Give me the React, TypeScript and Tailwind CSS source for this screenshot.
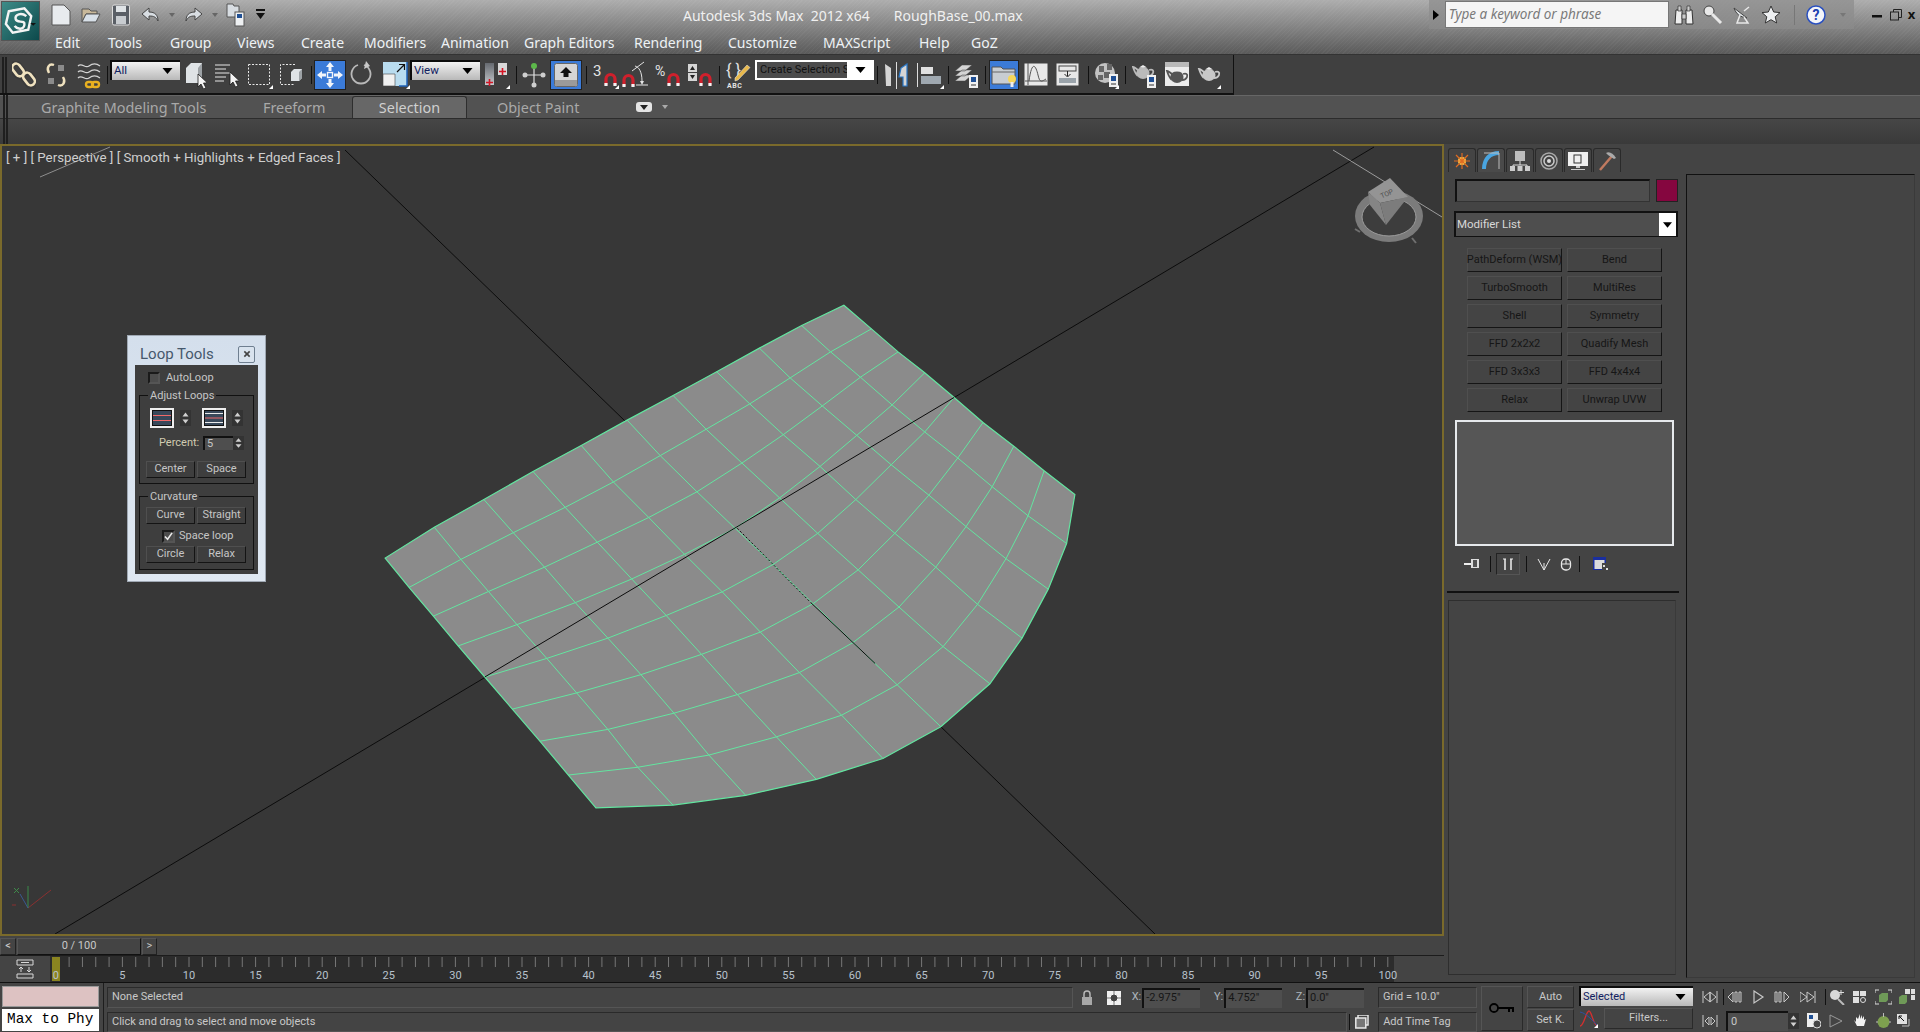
import React from 'react';

type SvgProps = { w: number; h?: number; className?: string; children?: React.ReactNode };

// every icon is drawn in its own little box, w wide and 28 high unless told otherwise
const Ic = ({ w, h = 28, className = '', children }: SvgProps) => (
  <svg viewBox={`0 0 ${w} ${h}`} width={w} height={h} className={`shrink-0 ${className}`}>
    {children}
  </svg>
);

const Cursor = ({ x, y }: { x: number; y: number }) => (
  <path transform={`translate(${x} ${y})`} d="M0 0v13l3-3 2.500 5 2.500-1-2.500-5h4z" fill="#f4f4f4" stroke="#1c1c1c" strokeWidth=".8" />
);
const Flyout = ({ x, y }: { x: number; y: number }) => (
  <path transform={`translate(${x} ${y})`} d="M4 0v4H0z" fill="#fff" />
);
const Magnet = ({ x, y }: { x: number; y: number }) => (
  <g transform={`translate(${x} ${y})`}>
    <path d="M2 13V7a4.500 4.500 0 0 1 9 0v6" fill="none" stroke="#d0202c" strokeWidth="3.200" />
    <path d="M.4 11h3.200v3H.4zM9.400 11h3.200v3H9.400z" fill="#f2f2f2" />
  </g>
);
const Teapot = ({ x = 0, y = 0, fill = '#c9c9c9' }: { x?: number; y?: number; fill?: string }) => (
  <g transform={`translate(${x} ${y})`}>
    <path d="M6 6c-2-1-3-3-5-3 1 3 2 6 4 8zM17 6c3-1 5 0 4 3s-3 3-5 3" fill="none" stroke={fill} strokeWidth="1.800" />
    <ellipse cx="11" cy="9" rx="6.500" ry="6" fill={fill} />
    <path d="M7 3.500h8l-4-2.500z" fill="#eee" />
  </g>
);
const SmallDoc = ({ x, y }: { x: number; y: number }) => (
  <g transform={`translate(${x} ${y})`}>
    <rect width="9" height="13" fill="#f0f0f0" />
    <rect x="2" y="2" width="5" height="5" fill="#1f4f94" />
    <path d="M2 10h5" stroke="#333" />
  </g>
);
const Gripper = ({ h = 'h-[32px]' }: { h?: string }) => (
  <div className={`${h} w-[5px] shrink-0 border-x-2 border-[#1f1f1f]`} />
);
const Sep = ({ ml, h = 'h-[18px]' }: { ml: string; h?: string }) => <div className={`w-px shrink-0 bg-[#111] ${h} ${ml}`} />;

const Drop = ({ label, className = '' }: { label: string; className?: string }) => (
  <div className={`flex h-[20px] shrink-0 items-center justify-between border-2 border-b-0 border-r-0 border-[#0c0c0c] bg-gradient-to-b from-[#f2f2f2] to-[#b9b9b9] pl-[2px] pr-[7px] font-['Roboto',sans-serif] text-[11.500px] text-[#102060] ${className}`}>
    <span>{label}</span>
    <svg viewBox="0 0 10 6" width="11" height="6"><path d="M0 0h10L5 6z" fill="#000" /></svg>
  </div>
);

const MainToolbar = () => (
  <div className="flex h-[40px] shrink-0 bg-[#404040]">
    <div className="flex h-full w-[1234px] shrink-0 items-center border-b-2 border-r border-[#111] pl-[2px] pt-px">
      <Gripper h="h-[36px]" />
      <Ic w={24} className="ml-[5px]">
        <g fill="none" stroke="#3a3a3a" strokeWidth="5"><rect x="1" y="2" width="9" height="15" rx="4.500" transform="rotate(-38 5 9)" /><rect x="13" y="12" width="9" height="15" rx="4.500" transform="rotate(-38 17 19)" /></g>
        <g fill="none" stroke="#f0e2bf" strokeWidth="2.600"><rect x="2" y="2" width="8" height="14" rx="4" transform="rotate(-38 6 9)" /><rect x="13" y="11" width="8" height="14" rx="4" transform="rotate(-38 17 18)" /></g>
      </Ic>
      <Ic w={22} className="ml-[9px]">
        <g fill="none" stroke="#f0e2bf" strokeWidth="2.400"><path d="M9 4C4 2 1 7 4 12" /><path d="M13 24c5 2 8-3 5-8" /></g>
        <g fill="#8b8b8b"><rect x="13" y="4" width="6" height="6" /><rect x="3" y="17" width="6" height="6" /></g>
      </Ic>
      <Ic w={24} className="ml-[10px]">
        <g fill="none" stroke="#d5d5d5" strokeWidth="1.300"><path d="M1 5c4-4 7 3 11 0s7-3 11 0" /><path d="M1 11c4-4 7 3 11 0s7-3 11 0" /><path d="M1 17c4-4 7 3 11 0s7-3 11 0" /></g>
        <g fill="none" stroke="#e8b020" strokeWidth="2.400"><rect x="9" y="21" width="7" height="5" rx="2.500" /><rect x="15" y="21" width="7" height="5" rx="2.500" /></g>
      </Ic>
      <Sep ml="ml-[6px]" />
      <Drop label="All" className="mb-[9px] ml-[2px] w-[70px]" />
      <Ic w={21} className="ml-[5px]">
        <path d="M1 7l5-5h11v15l-4 5H1z" fill="#dfe3e6" /><path d="M13 7l4-5v15l-4 5z" fill="#9da2a6" /><Cursor x={13} y={13} />
      </Ic>
      <Ic w={24} className="ml-[9px]">
        <path d="M0 4h15M0 8h11M0 12h15M0 16h11M0 20h9" stroke="#e6e6e6" strokeWidth="1.200" /><Cursor x={15} y={11} />
      </Ic>
      <Ic w={26} className="ml-[8px]">
        <rect x="1.500" y="3.500" width="21" height="20" fill="none" stroke="#e8e8e8" strokeDasharray="2 1.500" /><Flyout x={22} y={24} />
      </Ic>
      <Ic w={25} className="ml-[6px]">
        <path d="M16 3.500H1.500v20H16" fill="none" stroke="#e8e8e8" strokeDasharray="2 1.500" />
        <path d="M12 11l3-3h8v9l-3 3h-8z" fill="#dfe3e6" /><path d="M20 11l3-3v9l-3 3z" fill="#9da2a6" />
      </Ic>
      <Sep ml="ml-[7px]" />
      <div className="ml-[2px] flex h-[30px] w-[32px] shrink-0 items-center justify-center border border-[#222] bg-[#3b7bd8]">
        <Ic w={26} h={26}>
          <path d="M13 0l4 5h-2.500v4h-3V5H9zM13 26l-4-5h2.500v-4h3v4H17zM0 13l5-4v2.500h4v3H5V17zM26 13l-5 4v-2.500h-4v-3h4V9z" fill="#f2f5fa" />
          <rect x="10.500" y="10.500" width="5" height="5" fill="none" stroke="#f2f5fa" strokeWidth="1.400" />
        </Ic>
      </div>
      <Ic w={22} className="ml-[4px]">
        <path d="M8 4a9.500 9.500 0 1 0 6 0" fill="none" stroke="#b9b9b9" strokeWidth="1.800" /><path d="M16 0l-2 8 6-3z" fill="#c8c8c8" />
      </Ic>
      <Ic w={27} className="ml-[11px]">
        <path d="M0 1h24v24H0z" fill="#b9dcef" /><path d="M0 13h12v12H0z" fill="#f0f0f0" stroke="#444" strokeWidth=".6" />
        <path d="M14 11l7-7M16 3.500h5.500V9" fill="none" stroke="#111" strokeWidth="1.200" /><path d="M24 1v24h-8" fill="none" stroke="#1f62b8" strokeWidth="1.500" /><Flyout x={23} y={24} />
      </Ic>
      <Drop label="View" className="mb-[9px] w-[70px]" />
      <Ic w={26} className="ml-[4px]">
        <defs><linearGradient id="pv" x1="0" y1="0" x2="0" y2="1"><stop offset="0" stopColor="#666a70" /><stop offset="1" stopColor="#c5c8cc" /></linearGradient></defs>
        <rect x="1" y="2" width="9" height="22" fill="url(#pv)" /><rect x="14" y="2" width="9" height="12" fill="#d9d9d9" />
        <path d="M5.500 18v7M2 21.500h7M18.500 7v7M15 10.500h7" stroke="#d41525" strokeWidth="1.600" /><Flyout x={22} y={24} />
      </Ic>
      <Sep ml="ml-[6px]" />
      <Ic w={24} className="ml-[5px]">
        <path d="M12 4v20M2 14h20" stroke="#e0e0e0" strokeWidth="1.200" /><circle cx="12" cy="5" r="3" fill="#5cb84a" /><circle cx="3" cy="14" r="2.500" fill="#cfcfcf" /><circle cx="21" cy="14" r="2.500" fill="#cfcfcf" /><circle cx="12" cy="24" r="2.500" fill="#cfcfcf" />
      </Ic>
      <div className="ml-[4px] flex h-[30px] w-[32px] shrink-0 items-center justify-center border border-[#222] bg-[#3b7bd8]">
        <Ic w={24} h={24}>
          <rect x=".5" y=".5" width="23" height="23" rx="2" fill="#d5d5d5" stroke="#666" /><rect x="1" y="17" width="22" height="6" fill="#9a9a9a" /><path d="M12 4l6 6h-3.500v4h-5v-4H6z" fill="#111" />
        </Ic>
      </div>
      <Sep ml="ml-[4px]" />
      <Ic w={26} className="ml-[6px]">
        <text x="0" y="15" fontSize="15" fill="#e4e4e4" fontFamily="Roboto">3</text><Magnet x={11} y={11} /><Flyout x={22} y={24} />
      </Ic>
      <Ic w={27} className="ml-[3px]">
        <Magnet x={0} y={12} /><path d="M10 10L22 1M13 5c4 1 7 6 7 15M14 24h12" fill="none" stroke="#e4e4e4" /><path d="M20 24l-2-4h4z" fill="#e4e4e4" />
      </Ic>
      <Ic w={26} className="ml-[6px]">
        <text x="0" y="15" fontSize="14" fill="#e4e4e4" fontFamily="Roboto">%</text><Magnet x={12} y={11} />
      </Ic>
      <Ic w={25} className="ml-[7px]">
        <rect x="0" y="3" width="9" height="8" fill="#d5d5d5" /><rect x="0" y="12" width="9" height="8" fill="#d5d5d5" /><path d="M2 9l2.500-4L7 9zM2 14l2.500 4L7 14z" fill="#222" /><Magnet x={11} y={11} />
      </Ic>
      <Sep ml="ml-[6px]" />
      <Ic w={25} className="ml-[6px]">
        <text x="0" y="15" fontSize="16" fill="#e4e4e4" fontFamily="Roboto">{'{ }'}</text>
        <path d="M9 17L21 4l3 2.500L12 19l-3 1z" fill="#e8b84a" stroke="#eee" strokeWidth=".5" />
        <text x="1" y="27" fontSize="7" fill="#e4e4e4" fontWeight="700" fontFamily="Roboto" letterSpacing=".5">ABC</text>
      </Ic>
      <div className="mb-[9px] ml-[4px] flex h-[20px] w-[119px] shrink-0 items-center overflow-hidden border-2 border-white bg-white font-['Roboto',sans-serif] text-[11px] text-[#111]">
        <span className="flex h-full w-[90px] items-center overflow-hidden whitespace-nowrap bg-[#4c4c4c] pl-[3px]">Create Selection Set</span>
        <svg viewBox="0 0 10 6" width="11" height="6" className="ml-[8px]"><path d="M0 0h10L5 6z" fill="#000" /></svg>
      </div>
      <Sep ml="ml-[3px]" />
      <Ic w={24} className="ml-[7px]">
        <path d="M0 3l6 4v18H1zM22 3l-6 4-2 9h4v9h4z" fill="#d5d5d5" /><path d="M11.500 1v27" stroke="#ddd" /><path d="M22 3l-6 4-2 9h4v9h4z" fill="none" stroke="#2a78c8" strokeWidth="1.200" />
      </Ic>
      <Ic w={27} className="ml-[8px]">
        <path d="M.5 2v24" stroke="#ddd" /><rect x="4" y="6" width="12" height="7" fill="#e0e0e0" /><rect x="4" y="15" width="20" height="8" fill="#9fa8b0" /><Flyout x={23} y={24} />
      </Ic>
      <Sep ml="ml-[4px]" />
      <Ic w={25} className="ml-[5px]">
        <path d="M1 10l7-6h10l-7 6zM1 15l7-6h10l-7 6zM1 20l7-6h10l-7 6z" fill="#d5d5d5" stroke="#444" strokeWidth=".5" /><SmallDoc x={15} y={14} />
      </Ic>
      <Sep ml="ml-[6px]" />
      <div className="ml-[3px] flex h-[30px] w-[30px] shrink-0 items-center justify-center border border-[#222] bg-[#3b7bd8]">
        <Ic w={26} h={26}>
          <path d="M1 5h9l2 2h12v15H1z" fill="#c8cdd2" stroke="#555" /><path d="M1 10h23" stroke="#666" /><circle cx="21" cy="17" r="4" fill="#f5d65a" /><rect x="19.500" y="20" width="3" height="5" fill="#eee" />
        </Ic>
      </div>
      <Ic w={25} className="ml-[5px]">
        <rect x=".5" y="2.500" width="23" height="22" fill="#e8e8e8" /><path d="M4 2v22M1 20h22" stroke="#555" /><path d="M5 20c3-22 7-15 9-6s4 6 8 4" fill="none" stroke="#555" />
      </Ic>
      <Ic w={24} className="ml-[7px]">
        <rect x=".5" y="2.500" width="22" height="22" fill="#e8e8e8" /><rect x="3" y="5" width="17" height="5" fill="none" stroke="#444" /><rect x="3" y="17" width="17" height="5" fill="#9aa3aa" /><path d="M11.500 10v5M8.500 13l3 3 3-3" fill="none" stroke="#222" />
      </Ic>
      <Sep ml="ml-[8px]" />
      <Ic w={24} className="ml-[6px]">
        <circle cx="10" cy="12" r="10" fill="#c2c2c2" /><path d="M4 5h5v6H4zM9 11h6v6H9zM3 14h5v5H3zM12 3h5v6h-5z" fill="#666" /><SmallDoc x={14} y={13} /><Flyout x={20} y={24} />
      </Ic>
      <Sep ml="ml-[6px]" />
      <Ic w={25} className="ml-[6px]">
        <Teapot y={3} fill="#bbbbbb" /><SmallDoc x={15} y={14} />
      </Ic>
      <Ic w={24} className="ml-[8px]">
        <rect y="1" width="24" height="24" fill="#ececec" /><rect y="1" width="24" height="5" fill="#b9b9b9" /><Teapot x={1} y={7} fill="#555" />
      </Ic>
      <Ic w={24} className="ml-[8px]">
        <Teapot x={1} y={5} fill="#c8c8c8" /><Flyout x={20} y={24} />
      </Ic>
    </div>
  </div>
);

const Ribbon = () => (
  <div className="flex h-[49px] shrink-0 flex-col">
    <div className="flex h-[24px] items-center border-y border-y-[#666] border-b-[#2c2c2c] bg-[#525252] pl-[3px] text-[14.400px] text-[#a9a9a9]">
      <Gripper h="h-[24px]" />
      <span className="ml-[33px] mt-px w-[165px] whitespace-nowrap">Graphite Modeling Tools</span>
      <span className="ml-[57px] mt-px w-[60px]">Freeform</span>
      <span className="ml-[29px] flex h-[22px] w-[115px] items-center justify-center rounded-t-[3px] border border-b-0 border-[#2e2e2e] bg-[#676767] text-[#d0d0d0]">Selection</span>
      <span className="ml-[30px] mt-px w-[81px] whitespace-nowrap">Object Paint</span>
      <svg viewBox="0 0 16 10" width="16" height="10" className="ml-[58px]"><rect width="16" height="10" rx="3" fill="#e4e4e4" /><path d="M4 3h8L8 8z" fill="#222" /></svg>
      <svg viewBox="0 0 6 4" width="6" height="4" className="ml-[10px]"><path d="M0 0h6L3 4z" fill="#a9a9a9" /></svg>
    </div>
    <div className="flex h-[25px] items-center bg-gradient-to-b from-[#464646] to-[#3a3a3a] pl-[3px]">
      <Gripper h="h-[25px]" />
    </div>
  </div>
);

const rows = [
  '85,880 198,797 312,718 425,643 530,568 632,490 732,412 827,337 915,260 1003,183 1092,115',
  '138,965 258,892 380,820 495,746 607,673 712,597 810,512 900,428 985,343 1068,258 1150,183',
  '192,1053 320,990 447,925 570,855 685,782 795,705 892,615 980,522 1060,430 1137,340 1208,245',
  '250,1145 385,1090 518,1030 645,963 767,893 878,812 975,720 1058,620 1135,517 1208,420 1272,318',
  '310,1240 450,1192 590,1138 722,1078 850,1012 965,928 1063,828 1143,720 1217,607 1280,497 1335,392',
  '370,1335 518,1300 662,1252 800,1197 935,1132 1052,1043 1152,938 1232,820 1298,700 1355,582 1402,462',
  '432,1435 583,1412 738,1376 885,1322 1027,1258 1148,1168 1248,1055 1323,930 1385,795 1433,668 1468,535',
];
const cols = [
  '140,702 198,797 258,892 320,990 385,1090 450,1192 518,1300 583,1412 660,1524',
  '248,620 312,718 380,820 447,925 518,1030 590,1138 662,1252 738,1376 818,1495',
  '355,537 425,643 495,746 570,855 645,963 722,1078 800,1197 885,1322 972,1448',
  '460,460 530,568 607,673 685,782 767,893 850,1012 935,1132 1027,1258 1117,1386',
  '560,385 632,490 712,597 795,705 878,812 965,928 1052,1043 1148,1168 1243,1292',
  '660,312 732,412 810,512 892,615 975,720 1063,828 1152,938 1248,1055 1350,1165',
  '755,242 827,337 900,428 980,522 1058,620 1143,720 1232,820 1323,930 1420,1030',
  '848,172 915,260 985,343 1060,430 1135,517 1217,607 1298,700 1385,795 1477,885',
  '940,105 1003,183 1068,258 1137,340 1208,420 1280,497 1355,582 1433,668 1517,750',
];
const outline =
  '1032,45 1092,115 1150,183 1208,245 1272,318 1335,392 1402,462 1468,535 1535,605 1517,750 1477,885 1420,1030 1350,1165 1243,1292 1117,1386 972,1448 818,1495 660,1524 492,1532 432,1435 370,1335 310,1240 250,1145 192,1053 138,965 85,880 33,793 140,702 248,620 355,537 460,460 560,385 660,312 755,242 848,172 940,105';

const Scene = () => (
  <svg viewBox="2 146 1440 788" className="absolute inset-0 h-full w-full">
    <line x1="55" y1="934" x2="1374" y2="147" stroke="#0c0c0c" />
    <line x1="345" y1="150" x2="1155" y2="934" stroke="#0c0c0c" />
    <line x1="40" y1="177" x2="110" y2="147" stroke="#8e8e8e" />
    <g transform="translate(370 290) scale(.4592 .338)">
      <polygon points={outline} fill="#8b8b8b" stroke="#63e5a0" strokeWidth="1.200" vectorEffect="non-scaling-stroke" />
      <g fill="none" stroke="#63e5a0" strokeWidth="1">
        {rows.map(p => <polyline key={p} points={p} vectorEffect="non-scaling-stroke" />)}
        {cols.map(p => <polyline key={p} points={p} vectorEffect="non-scaling-stroke" />)}
      </g>
      <g fill="none" stroke="#0c0c0c" strokeWidth="1">
        <line x1="250" y1="1145" x2="1272" y2="318" vectorEffect="non-scaling-stroke" />
        <line x1="800" y1="705" x2="960" y2="925" strokeDasharray="2 2" vectorEffect="non-scaling-stroke" />
        <line x1="960" y1="925" x2="1100" y2="1105" vectorEffect="non-scaling-stroke" />
      </g>
    </g>
    {/* view cube */}
    <line x1="1333" y1="150" x2="1442" y2="217" stroke="#9c9c9c" />
    <g>
      <ellipse cx="1389" cy="216" rx="34" ry="26" fill="#7b7b7b" />
      <ellipse cx="1389" cy="217" rx="27" ry="19" fill="#3d3d3d" stroke="#9c9c9c" strokeWidth="1" />
      <polygon points="1390,178 1408,197 1380,203 1368,192" fill="#949494" />
      <polygon points="1368,192 1380,203 1386,225 1370,205" fill="#858585" />
      <polygon points="1380,203 1408,197 1386,225" fill="#7c7c7c" />
      <text x="1387" y="196" fontSize="7" textAnchor="middle" fill="#4e4e4e" transform="rotate(-24 1387 194)" fontFamily="Roboto">TOP</text>
      <path d="M1355 229l5 3M1412 238l4 5" stroke="#6f6f6f" strokeWidth="2" />
    </g>
    {/* axis tripod */}
    <g fill="none" strokeWidth="1">
      <path d="M28 908L51 890" stroke="#8a3030" />
      <path d="M28 908V886" stroke="#3a8a4a" />
      <path d="M28 908L20 894" stroke="#3a5a90" />
      <path d="M14 888l5 5M14 893l5-5" stroke="#3f8a4a" />
      <path d="M12 905h4" stroke="#8a3030" />
    </g>
  </svg>
);

const LoopBtn = ({ label, w = 'w-[49px]', className = '' }: { label: string; w?: string; className?: string }) => (
  <div className={`flex h-[17px] items-center justify-center border border-[#4f4f4f] border-b-[#141414] border-r-[#141414] text-[11px] text-[#c6c6c6] ${w} ${className}`}>
    {label}
  </div>
);
const Spin = ({ h = 'h-[16px]' }: { h?: string }) => (
  <svg viewBox="0 0 11 16" className={`w-[11px] shrink-0 ${h}`} preserveAspectRatio="none">
    <rect width="11" height="16" fill="#333" /><path d="M2.500 6.500l3-4 3 4zM2.500 9.500l3 4 3-4z" fill="#cfcfcf" />
  </svg>
);
const LoopIcon = ({ three }: { three?: boolean }) => (
  <div className="flex h-[20px] w-[24px] shrink-0 items-center justify-center border-2 border-[#eee] bg-[#111]">
    <svg viewBox="0 0 18 14" width="18" height="14">
      <rect width="18" height="14" fill="#38485a" />
      {three ? (
        <>
          <path d="M0 2.500h18M0 11.500h18" stroke="#e8e8e8" /><path d="M0 7h18" stroke="#f06868" />
        </>
      ) : (
        <path d="M0 4.500h18M0 9.500h18" stroke="#f06868" />
      )}
    </svg>
  </div>
);
const Legend = ({ children }: { children: string }) => (
  <legend className="ml-[2px] px-[2px] text-[11px] leading-[11px] text-[#c6c6c6]">{children}</legend>
);

const LoopTools = () => (
  <div className="absolute left-[125px] top-[189px] flex h-[247px] w-[139px] flex-col border border-[#9fa8b3] bg-gradient-to-b from-[#d4dfec] to-[#dfe8f2] px-[7px] pb-[7px] font-['Roboto',sans-serif]">
    <div className="flex h-[29px] shrink-0 items-center justify-between pl-[5px] pr-[3px] pt-[7px]">
      <span className="text-[15px] text-[#46586c]">Loop Tools</span>
      <div className="flex h-[17px] w-[17px] items-center justify-center rounded-[2px] border border-[#6f7f90] bg-[#d9e3ee]">
        <svg viewBox="0 0 9 9" width="8" height="8"><path d="M1.500 1.500l6 6M7.500 1.500l-6 6" stroke="#444" strokeWidth="1.800" /></svg>
      </div>
    </div>
    <div className="flex flex-1 flex-col bg-[#3e3e3e] px-[4px] text-[11px] text-[#c6c6c6]">
      <div className="ml-[9px] mt-[7px] flex h-[12px] items-center">
        <div className="h-[12px] w-[12px] border-2 border-[#1a1a1a] border-b-[#555] border-r-[#555] bg-[#4c4c4c]" />
        <span className="ml-[6px]">AutoLoop</span>
      </div>
      <fieldset className="mt-[6px] h-[94px] border border-[#111] pl-[6px]">
        <Legend>Adjust Loops</Legend>
        <div className="ml-[4px] mt-[7px] flex items-center">
          <LoopIcon />
          <div className="w-[6px]" />
          <Spin />
          <div className="w-[11px]" />
          <LoopIcon three />
          <div className="w-[6px]" />
          <Spin />
        </div>
        <div className="ml-[13px] mt-[8px] flex h-[14px] items-center">
          <span className="w-[41px] whitespace-nowrap text-[#d0cbb0]">Percent:</span>
          <div className="ml-[3px] flex h-[14px] w-[30px] items-center border-2 border-b-0 border-r-0 border-[#111] bg-[#4e4e4e] pl-[2px] text-[#c6c6c6]">5</div>
          <Spin h="h-[14px]" />
        </div>
        <div className="mt-[11px] flex gap-[2px]">
          <LoopBtn label="Center" />
          <LoopBtn label="Space" />
        </div>
      </fieldset>
      <fieldset className="mt-[7px] h-[79px] border border-[#111] pl-[6px]">
        <Legend>Curvature</Legend>
        <div className="mt-[5px] flex gap-[2px]">
          <LoopBtn label="Curve" />
          <LoopBtn label="Straight" />
        </div>
        <div className="ml-[16px] mt-[6px] flex h-[12px] items-center">
          <div className="flex h-[13px] w-[13px] items-center justify-center border-2 border-[#1a1a1a] border-b-[#555] border-r-[#555] bg-[#4c4c4c]">
            <svg viewBox="0 0 10 10" width="9" height="9"><path d="M1 5l3 3 5-7" fill="none" stroke="#e8e8e8" strokeWidth="1.800" /></svg>
          </div>
          <span className="ml-[4px]">Space loop</span>
        </div>
        <div className="mt-[4px] flex gap-[2px]">
          <LoopBtn label="Circle" />
          <LoopBtn label="Relax" />
        </div>
      </fieldset>
    </div>
  </div>
);

const ticks = Array.from({ length: 101 }, (_, i) => i);

const Timeline = () => (
  <div className="flex h-[27px] shrink-0 border-t border-[#1c1c1c]">
    <div className="flex w-[50px] shrink-0 items-center justify-center">
      <Ic w={18} h={20}>
        <path d="M1 1h16v5H1zM1 15h16v4H1z" fill="none" stroke="#d8d8d8" /><path d="M5 8v5M3 10l2-2 2 2M13 8v5M11 11l2 2 2-2M5 3.500h8" fill="none" stroke="#d8d8d8" />
      </Ic>
    </div>
    <svg viewBox="50 956 1344 26" className="h-[26px] w-[1344px] shrink-0 overflow-visible bg-[#2c2c2c]">
      {ticks.map(i => (
        <line key={i} x1={55.8 + i * 13.32} x2={55.8 + i * 13.32} y1="957" y2={967} stroke="#777" />
      ))}
      <rect x="52" y="957" width="8" height="24" fill="#8a8420" />
      {ticks.filter(i => i % 5 === 0).map(i => (
        <text key={i} x={55.8 + i * 13.32} y="979" textAnchor="middle" fontSize="11" fill="#b8c2cc" fontFamily="Roboto">{i}</text>
      ))}
    </svg>
  </div>
);

const ModBtn = ({ label }: { label: string }) => (
  <div className="flex h-[24px] items-center justify-center whitespace-nowrap border border-[#4f4f4f] border-b-[#151515] border-r-[#151515] text-[11px] text-[#161616]">
    {label}
  </div>
);

const CommandPanel = () => (
  <div className="flex flex-1 bg-[#444] font-['Roboto',sans-serif]">
    <div className="w-[242px] shrink-0 pl-[3px]">
      <div className="flex h-[28px] items-end">
        <div className="flex h-[24px] gap-[1px] pl-[1px]">
          <div className="flex w-[28px] items-center justify-center rounded-t-[3px] border border-b-0 border-[#2a2a2a]">
            <Ic w={16} h={16}><circle cx="8" cy="8" r="4" fill="#ffd050" /><path d="M8 0v16M0 8h16M2 2l12 12M14 2L2 14" stroke="#e06a20" strokeWidth="1.200" /></Ic>
          </div>
          <div className="flex w-[28px] items-center justify-center rounded-t-[3px] border border-b-0 border-[#2a2a2a] bg-[#4a4a4a]">
            <Ic w={19} h={20}><path d="M2 18C2 8 8 2 17 2" fill="none" stroke="#4aa5e0" strokeWidth="4" /><path d="M2 2h15v16" fill="none" stroke="#bbb" /></Ic>
          </div>
          <div className="flex w-[28px] items-center justify-center rounded-t-[3px] border border-b-0 border-[#2a2a2a]">
            <Ic w={20} h={20}><rect x="5" y="0" width="10" height="10" fill="#bdbdbd" /><path d="M10 10v4M3 17v-3h14v3" fill="none" stroke="#ddd" /><rect x="0" y="15" width="5" height="5" fill="#ccc" /><rect x="7.500" y="15" width="5" height="5" fill="#ccc" /><rect x="15" y="15" width="5" height="5" fill="#ccc" /></Ic>
          </div>
          <div className="flex w-[28px] items-center justify-center rounded-t-[3px] border border-b-0 border-[#2a2a2a]">
            <Ic w={18} h={18}><circle cx="9" cy="9" r="8" fill="none" stroke="#aaa" strokeWidth="1.500" /><circle cx="9" cy="9" r="5" fill="none" stroke="#ccc" strokeWidth="1.500" /><circle cx="9" cy="9" r="2" fill="#ddd" /></Ic>
          </div>
          <div className="flex w-[28px] items-center justify-center rounded-t-[3px] border border-b-0 border-[#2a2a2a]">
            <Ic w={20} h={20}><rect x="0" y="1" width="20" height="14" fill="#f0f0f0" /><rect x="6" y="4" width="7" height="8" fill="none" stroke="#333" /><path d="M8 15h4v2H8zM3 18h14v1H3z" fill="#ccc" /></Ic>
          </div>
          <div className="flex w-[28px] items-center justify-center rounded-t-[3px] border border-b-0 border-[#2a2a2a]">
            <Ic w={20} h={20}><path d="M3 19L15 5" stroke="#c07a60" strokeWidth="2.500" /><path d="M9 2c3-2 7 0 10 5l-2 1-6-4z" fill="#aaa" /></Ic>
          </div>
        </div>
      </div>
      <div className="ml-[8px] mt-[7px] flex items-stretch">
        <div className="h-[23px] w-[195px] border-2 border-b border-r border-[#111] border-b-[#333] border-r-[#333] bg-[#4e4e4e]" />
        <div className="ml-[6px] h-[23px] w-[22px] border border-[#222] bg-[#85063f]" />
      </div>
      <div className="ml-[7px] mt-[9px] flex h-[26px] w-[224px] items-center justify-between border-2 border-b border-[#111] bg-[#4e4e4e] text-[11.500px] text-[#d8d8d8]">
        <span className="pl-[1px]">Modifier List</span>
        <div className="flex h-full w-[17px] items-center justify-center bg-white">
          <svg viewBox="0 0 10 6" width="9" height="6"><path d="M0 0h10L5 6z" fill="#000" /></svg>
        </div>
      </div>
      <div className="ml-[20px] mt-[11px] grid w-[195px] grid-cols-[95px_95px] gap-x-[5px] gap-y-[4px]">
        {['PathDeform (WSM)', 'Bend', 'TurboSmooth', 'MultiRes', 'Shell', 'Symmetry', 'FFD 2x2x2', 'Quadify Mesh', 'FFD 3x3x3', 'FFD 4x4x4', 'Relax', 'Unwrap UVW'].map(l => (
          <ModBtn key={l} label={l} />
        ))}
      </div>
      <div className="ml-[8px] mt-[8px] h-[126px] w-[219px] border-2 border-[#e6e9ec] bg-[#565656]" />
      <div className="ml-[8px] mt-[8px] flex h-[20px] items-center">
        <Ic w={16} h={14} className="ml-[9px]"><path d="M0 7h7" stroke="#eee" strokeWidth="2" /><path d="M7 2h8v9H7z" fill="#ddd" /><path d="M9 3v7h4V3z" fill="#555" /></Ic>
        <Sep ml="ml-[10px]" h="h-[16px]" />
        <div className="ml-[5px] flex h-[22px] w-[24px] items-center justify-center border border-[#222] border-b-[#555] border-r-[#555]">
          <Ic w={10} h={14}><path d="M2 2v11M8 2v11" stroke="#eee" strokeWidth="1.500" /><path d="M0 2h3M7 2h3" stroke="#eee" /></Ic>
        </div>
        <Sep ml="ml-[6px]" h="h-[16px]" />
        <Ic w={14} h={14} className="ml-[10px]"><path d="M1 2l6 11 6-11M7 13V6" fill="none" stroke="#e8e8e8" /></Ic>
        <Ic w={12} h={14} className="ml-[9px]"><rect x="1.500" y="2" width="9" height="11" rx="4" fill="none" stroke="#e8e8e8" strokeWidth="1.300" /><path d="M1.500 7h9M6 2v5" stroke="#e8e8e8" /></Ic>
        <Sep ml="ml-[7px]" h="h-[16px]" />
        <Ic w={16} h={15} className="ml-[13px]"><rect width="13" height="13" fill="#1a2fa0" /><rect x="1.500" y="3" width="10" height="9" fill="#ddd" /><path d="M9 6h7v9H9z" fill="#444" /><path d="M10 8h2v2h-2zM13 11h2v2h-2z" fill="#ddd" /></Ic>
      </div>
      <div className="mt-[16px] h-[3px] w-[232px] border-b-2 border-[#111]" />
      <div className="ml-[1px] mt-[7px] h-[375px] w-[228px] border border-[#2e2e2e] border-r-[#3a3a3a]" />
    </div>
    <div className="mt-[30px] h-[804px] w-[229px] border border-[#3a3a3a] border-l-[#111] border-t-[#111]" />
  </div>
);

const Field = ({ children, className = '' }: { children?: React.ReactNode; className?: string }) => (
  <div className={`flex items-center border border-[#2a2a2a] border-b-[#555] border-r-[#555] pl-[4px] text-[11px] text-[#c8c8c8] ${className}`}>{children}</div>
);
const Coord = ({ label, value, lw, w = 'w-[58px]' }: { label: string; value: string; lw: string; w?: string }) => (
  <>
    <span className={`text-right text-[11px] text-[#aeb6bd] ${lw}`}>{label}</span>
    <div className={`ml-[1px] flex h-[20px] items-center border-2 border-b-0 border-r-0 border-[#111] bg-[#4e4e4e] pl-[2px] text-[11px] text-[#161616] ${w}`}>{value}</div>
  </>
);
const KeyBtn = ({ label }: { label: string }) => (
  <div className="flex h-[22px] w-[47px] items-center justify-center border border-[#2a2a2a] border-t-[#555] border-l-[#555] text-[11px] text-[#c8c8c8]">{label}</div>
);

const StatusBar = () => (
  <div className="flex h-[50px] shrink-0 items-stretch bg-[#444] font-['Roboto',sans-serif]">
    <div className="ml-[2px] flex w-[97px] shrink-0 flex-col gap-[2px] pt-[3px]">
      <div className="h-[21px] border border-[#999] bg-[#ddc2c2]" />
      <div className="flex h-[22px] items-center overflow-hidden whitespace-nowrap bg-white pl-[5px] font-['Liberation_Mono',monospace] text-[14.400px] text-black">Max to Phy</div>
    </div>
    <div className="ml-[4px] h-full w-px bg-[#1d1d1d]" />
    <div className="ml-[3px] flex w-[1370px] shrink-0 flex-col">
      <div className="mt-[4px] flex h-[21px] items-center">
        <Field className="h-[21px] w-[967px]">None Selected</Field>
        <Ic w={12} h={15} className="ml-[8px]"><path d="M3 7V4a3 3 0 0 1 6 0v3" fill="none" stroke="#b8b8b8" strokeWidth="1.500" /><rect x="1" y="7" width="10" height="8" fill="#a8a8a8" /></Ic>
        <Ic w={14} h={14} className="ml-[14px]"><rect width="14" height="14" fill="#f0f0f0" /><circle cx="7" cy="7" r="4" fill="#444" stroke="#fff" /><path d="M7 0v14M0 7h14" stroke="#444" strokeWidth=".7" /></Ic>
        <Coord label="X:" value="-2.975&quot;" lw="w-[20px]" />
        <Coord label="Y:" value="4.752&quot;" lw="w-[23px]" />
        <Coord label="Z:" value="0.0&quot;" lw="w-[23px]" />
        <Field className="ml-[14px] h-[21px] w-[99px] text-[#b8c0c8]">Grid = 10.0&quot;</Field>
      </div>
      <div className="mt-[4px] flex h-[20px] items-center">
        <Field className="h-[20px] w-[1242px]">Click and drag to select and move objects</Field>
        <div className="ml-[2px] h-[16px] w-px bg-[#111]" />
        <Ic w={14} h={14} className="ml-[5px]"><rect x="3" y="0" width="10" height="10" fill="none" stroke="#e8e8e8" strokeWidth="1.500" /><rect x=".8" y="3" width="10" height="10" fill="#777" stroke="#e8e8e8" strokeWidth="1.500" /></Ic>
        <Field className="ml-[9px] h-[20px] w-[99px] text-[#b8c0c8]">Add Time Tag</Field>
      </div>
    </div>
    <div className="ml-[4px] mt-[3px] flex h-[45px] w-[42px] shrink-0 items-center justify-center border border-[#2a2a2a] border-l-[#555] border-t-[#555]">
      <Ic w={26} h={12}><circle cx="5" cy="5" r="4" fill="none" stroke="#000" strokeWidth="1.800" /><path d="M9 5h16M20 5v4M24 5v4" stroke="#000" strokeWidth="2" /></Ic>
    </div>
    <div className="ml-[4px] mt-[3px] flex w-[47px] shrink-0 flex-col gap-[1px]">
      <KeyBtn label="Auto" />
      <KeyBtn label="Set K." />
    </div>
    <div className="ml-[5px] mt-[3px] flex w-[115px] shrink-0 flex-col gap-[2px]">
      <Drop label="Selected" className="w-[114px] text-[11px]" />
      <div className="flex h-[21px] items-center">
        <Ic w={20} h={20}><path d="M1 17C5 17 7 2 10 2s4 15 9 15" fill="none" stroke="#d43030" strokeWidth="1.300" /><path d="M1 3c6 1 12 8 18 14" fill="none" stroke="#3050a0" /><Flyout x={15} y={15} /></Ic>
        <div className="ml-[5px] flex h-[21px] w-[89px] items-center justify-center border border-[#2a2a2a] border-l-[#555] border-t-[#555] text-[11px] text-[#c8c8c8]">Filters...</div>
      </div>
    </div>
    <div className="ml-[8px] mt-[3px] flex flex-col">
      <div className="flex h-[22px] items-center">
        <Ic w={16} h={12}><path d="M1 0v12M15 0v12M2 6l6-5v10zM14 6L8 1v10z" fill="none" stroke="#c8c8c8" /></Ic>
        <Sep ml="ml-[5px]" h="h-[16px]" />
        <Ic w={16} h={12} className="ml-[4px]"><path d="M0 6l5-5v10zM7 1h2v10H7zM11 1h2v10h-2z" fill="none" stroke="#c8c8c8" /></Ic>
        <Ic w={12} h={16} className="ml-[9px]"><path d="M1 2l9 6-9 6z" fill="none" stroke="#c8c8c8" strokeWidth="1.200" /></Ic>
        <Ic w={16} h={12} className="ml-[9px]"><path d="M1 1h2v10H1zM5 1h2v10H5zM10 1l5 5-5 5z" fill="none" stroke="#c8c8c8" /></Ic>
        <Ic w={16} h={12} className="ml-[10px]"><path d="M0 1l7 5-7 5zM7 1l7 5-7 5zM15 0v12" fill="none" stroke="#c8c8c8" /></Ic>
        <Sep ml="ml-[9px]" h="h-[16px]" />
        <Ic w={16} h={16} className="ml-[3px]"><circle cx="6" cy="6" r="5" fill="#d8d8d8" /><path d="M9 10l6 6" stroke="#bbb" strokeWidth="2" /><path d="M12 1v5M10 3.500h5" stroke="#ddd" /></Ic>
        <Ic w={14} h={14} className="ml-[8px]"><path d="M0 1h6v5H0zM7 1h6v5H7zM0 7h6v6H0z" fill="#e0e0e0" /><circle cx="10" cy="10" r="2.500" fill="none" stroke="#ddd" /></Ic>
        <Ic w={17} h={16} className="ml-[8px]"><path d="M0 4V1h4M13 1h4v3M0 12v3h4M13 15h4v-3" fill="none" stroke="#ddd" /><path d="M4 6l3-2h6v7l-2 2H4z" fill="#6f9a58" /></Ic>
        <Ic w={17} h={16} className="ml-[6px]"><rect x="7" y="0" width="5" height="5" fill="#ddd" /><rect x="13" y="0" width="4" height="5" fill="#ddd" /><rect x="13" y="6" width="4" height="5" fill="#ddd" /><path d="M1 8l3-2h5v7l-2 2H1z" fill="#6f9a58" /></Ic>
      </div>
      <div className="mt-[2px] flex h-[22px] items-center">
        <Ic w={16} h={12}><path d="M1 0v12M15 0v12M3 6l4-4v8zM13 6L9 2v8z" fill="none" stroke="#c8c8c8" /></Ic>
        <div className="ml-[8px] flex h-[20px] w-[62px] items-center border-2 border-b-0 border-r-0 border-[#111] bg-[#4e4e4e] pl-[3px] text-[11px] text-[#c8c8c8]">0</div>
        <Spin h="h-[16px]" />
        <div className="w-[8px]" />
        <Ic w={14} h={16}><rect width="11" height="14" fill="#eee" /><rect x="2" y="2" width="4" height="4" fill="#1f4f94" /><circle cx="10" cy="11" r="4" fill="#444" stroke="#ddd" /></Ic>
        <Ic w={15} h={16} className="ml-[8px]"><path d="M1 2l12 6-12 6z" fill="none" stroke="#999" /></Ic>
        <Ic w={15} h={16} className="ml-[8px]"><path d="M2 7l3 6h7l2-7-2 1V3l-2 3V2L8 6V1L6 6 4 4v5z" fill="#f2f2f2" /></Ic>
        <Ic w={15} h={16} className="ml-[9px]"><circle cx="7.500" cy="9" r="6" fill="#7ea04f" /><path d="M7.500 0v4M0 9h2M13 9h2" stroke="#bbb" /></Ic>
        <Ic w={14} h={14} className="ml-[6px]"><rect width="10" height="10" fill="#e0e0e0" /><path d="M2 2l5 5M2 2h3M2 2v3" stroke="#111" /><path d="M12 5v7H5" stroke="#bbb" fill="none" /></Ic>
      </div>
    </div>
  </div>
);

const menus = [
  { l: 'Edit', c: 'w-[53px]' },
  { l: 'Tools', c: 'w-[62px]' },
  { l: 'Group', c: 'w-[67px]' },
  { l: 'Views', c: 'w-[64px]' },
  { l: 'Create', c: 'w-[63px]' },
  { l: 'Modifiers', c: 'w-[77px]' },
  { l: 'Animation', c: 'w-[83px]' },
  { l: 'Graph Editors', c: 'w-[110px]' },
  { l: 'Rendering', c: 'w-[94px]' },
  { l: 'Customize', c: 'w-[95px]' },
  { l: 'MAXScript', c: 'w-[96px]' },
  { l: 'Help', c: 'w-[52px]' },
  { l: 'GoZ', c: 'w-[30px]' },
];

const TitleBar = () => (
  <div className="flex h-[55px] shrink-0 border-b border-[#333] bg-[repeating-linear-gradient(135deg,rgba(255,255,255,0.035)_0_1px,transparent_1px_3px),linear-gradient(180deg,#adadad_0%,#5a5a5a_100%)] text-[#f0f0f0]">
    <div className="ml-px mt-px h-[40px] w-[39px] shrink-0 border border-[#555] bg-gradient-to-br from-[#3d8c88] to-[#0c4a4c]">
      <svg viewBox="0 0 38 38" width="37" height="38">
        <path d="M7 9l16-3 7 8-3 14-16 3-7-9z" fill="none" stroke="#f4f4f4" strokeWidth="2.500" />
        <path d="M25 14c-5-4-12-2-11 3s10 0 9 6-8 4-10 1" fill="none" stroke="#f4f4f4" strokeWidth="2.500" />
        <path d="M29 21h6l-3 3z" fill="#111" />
      </svg>
    </div>
    <div className="flex flex-1 flex-col">
      <div className="flex h-[29px] items-center">
        <Ic w={20} h={22} className="ml-[11px]"><path d="M1 1h12l6 6v14H1z" fill="#e8ebee" stroke="#555" /></Ic>
        <Ic w={20} h={18} className="ml-[10px]"><path d="M1 3h7l2 2h6v3H5L1 16z" fill="#c8b89a" stroke="#555" /><path d="M5 8h14l-4 8H1z" fill="#d8e0e8" stroke="#555" /></Ic>
        <Ic w={18} h={22} className="ml-[11px]"><rect x=".5" y="1" width="17" height="20" rx="1.500" fill="#5a5f66" stroke="#ddd" /><rect x="4" y="2" width="10" height="6" fill="#dfe3e6" /><rect x="4" y="12" width="10" height="8" fill="#c8ccd0" /></Ic>
        <Ic w={19} h={16} className="ml-[11px]"><path d="M8 1L1 7l7 6V9c5 0 7 1 9 5 0-6-3-9-9-9z" fill="#d8dde2" stroke="#444" /></Ic>
        <svg viewBox="0 0 6 4" width="6" height="4" className="ml-[9px]"><path d="M0 0h6L3 4z" fill="#666" /></svg>
        <Ic w={19} h={16} className="ml-[9px]"><path d="M11 1l7 6-7 6V9c-5 0-7 1-9 5 0-6 3-9 9-9z" fill="#d8dde2" stroke="#444" /></Ic>
        <svg viewBox="0 0 6 4" width="6" height="4" className="ml-[9px]"><path d="M0 0h6L3 4z" fill="#666" /></svg>
        <Ic w={19} h={24} className="ml-[8px]"><path d="M1 1h6l1 2h5v11H1z" fill="#d8dde2" stroke="#555" /><rect x="9" y="9" width="9" height="14" fill="#eef0f2" stroke="#555" /><rect x="11" y="11" width="5" height="4" fill="#1f4f94" /></Ic>
        <svg viewBox="0 0 9 11" width="9" height="11" className="ml-[11px]"><path d="M0 0h9v2H0zM0 4h9L4.500 10z" fill="#111" /></svg>
        <span className="ml-[418px] mt-[2px] whitespace-pre text-[14px]">Autodesk 3ds Max  2012 x64</span>
        <span className="ml-[24px] mt-[2px] text-[14px]">RoughBase_00.max</span>
        <div className="ml-[406px] flex h-[29px] items-center bg-[#8b8b8b]/70 pl-[4px]">
          <svg viewBox="0 0 6 10" width="6" height="10"><path d="M0 0l6 5-6 5z" fill="#000" /></svg>
          <div className="ml-[6px] flex h-[27px] w-[224px] items-center border border-[#777] bg-[#f5f5f5] pl-[3px] text-[13.500px] italic text-[#7a7a7a]">Type a keyword or phrase</div>
          <Ic w={20} h={20} className="ml-[5px]"><path d="M2 5h6v14H1zM12 5h6l1 14h-7z" fill="#eee" stroke="#333" /><path d="M4 1h3v5H4zM13 1h3v5h-3zM8 9h4v5H8z" fill="#ccc" stroke="#333" strokeWidth=".7" /></Ic>
          <Ic w={20} h={20} className="ml-[9px]"><circle cx="6" cy="6" r="5" fill="#e8e8e8" stroke="#444" /><path d="M9 9l9 9" stroke="#e8e8e8" strokeWidth="3" /></Ic>
          <Ic w={20} h={20} className="ml-[9px]"><path d="M2 3c2 6 6 9 13 10z" fill="#dfe3e6" stroke="#444" /><path d="M8 10l-3 8h11l-4-6M12 6l5-4" fill="none" stroke="#e8e8e8" strokeWidth="1.500" /></Ic>
          <Ic w={20} h={20} className="ml-[9px]"><path d="M10 1l2.700 6 6.300.600-4.800 4.200 1.500 6.200-5.700-3.300L4.300 18l1.500-6.200L1 7.600 7.300 7z" fill="#eef0f2" stroke="#333" /></Ic>
          <div className="ml-[13px] h-[20px] w-px bg-[#777]" />
          <Ic w={20} h={20} className="ml-[11px]"><circle cx="10" cy="10" r="9" fill="#f4f6fa" stroke="#2a50c0" strokeWidth="1.500" /><text x="10" y="15" textAnchor="middle" fontSize="14" fontWeight="700" fill="#1a40b0" fontFamily="Roboto">?</text></Ic>
          <svg viewBox="0 0 6 4" width="6" height="4" className="ml-[14px]"><path d="M0 0h6L3 4z" fill="#777" /></svg>
          <div className="w-[8px]" />
        </div>
        <Ic w={10} h={4} className="ml-[18px] mt-[4px]"><rect width="10" height="2.500" fill="#111" /></Ic>
        <Ic w={12} h={12} className="ml-[8px]"><path d="M3.500 3V.5h8v8H9" fill="none" stroke="#222" /><rect x=".5" y="3" width="8" height="8" fill="none" stroke="#222" /></Ic>
        <span className="ml-[6px] text-[13px] font-bold leading-none text-[#111]">x</span>
      </div>
      <div className="flex h-[25px] items-center pl-[15px] pt-[2px] text-[14px] text-[#eef2f5]">
        {menus.map(m => (
          <span key={m.l} className={`shrink-0 ${m.c}`}>{m.l}</span>
        ))}
      </div>
    </div>
  </div>
);

export default function App() {
  return (
    <div className="flex h-[1032px] w-[1920px] flex-col overflow-hidden bg-[#444] font-['Noto_Sans',sans-serif]">
      <TitleBar />
      <MainToolbar />
      <Ribbon />
      <div className="flex h-[838px] shrink-0">
        <div className="flex w-[1444px] shrink-0 flex-col">
          <div className="relative h-[792px] shrink-0 border-2 border-[#7a6a2b] bg-[#373737]">
            <Scene />
            <span className="absolute left-[4px] top-[2px] whitespace-pre font-['Roboto',sans-serif] text-[13.300px] text-[#cfcfcf]">[ + ] [ Perspective ] [ Smooth + Highlights + Edged Faces ]</span>
            <LoopTools />
          </div>
          <div className="flex h-[19px] shrink-0 items-center pt-px font-['Roboto',sans-serif] text-[11px] text-[#c8c8c8]">
            <div className="flex h-[17px] w-[16px] items-center justify-center border border-[#555] border-b-[#222] border-r-[#222]">&lt;</div>
            <div className="ml-px flex h-[17px] w-[124px] items-center justify-center border border-[#555] border-b-[#111] border-r-[#111]">0 / 100</div>
            <div className="ml-px flex h-[17px] w-[15px] items-center justify-center border border-[#555] border-b-[#222] border-r-[#222]">&gt;</div>
          </div>
          <Timeline />
        </div>
        <CommandPanel />
      </div>
      <div className="h-px shrink-0 bg-[#111]" />
      <StatusBar />
    </div>
  );
}
